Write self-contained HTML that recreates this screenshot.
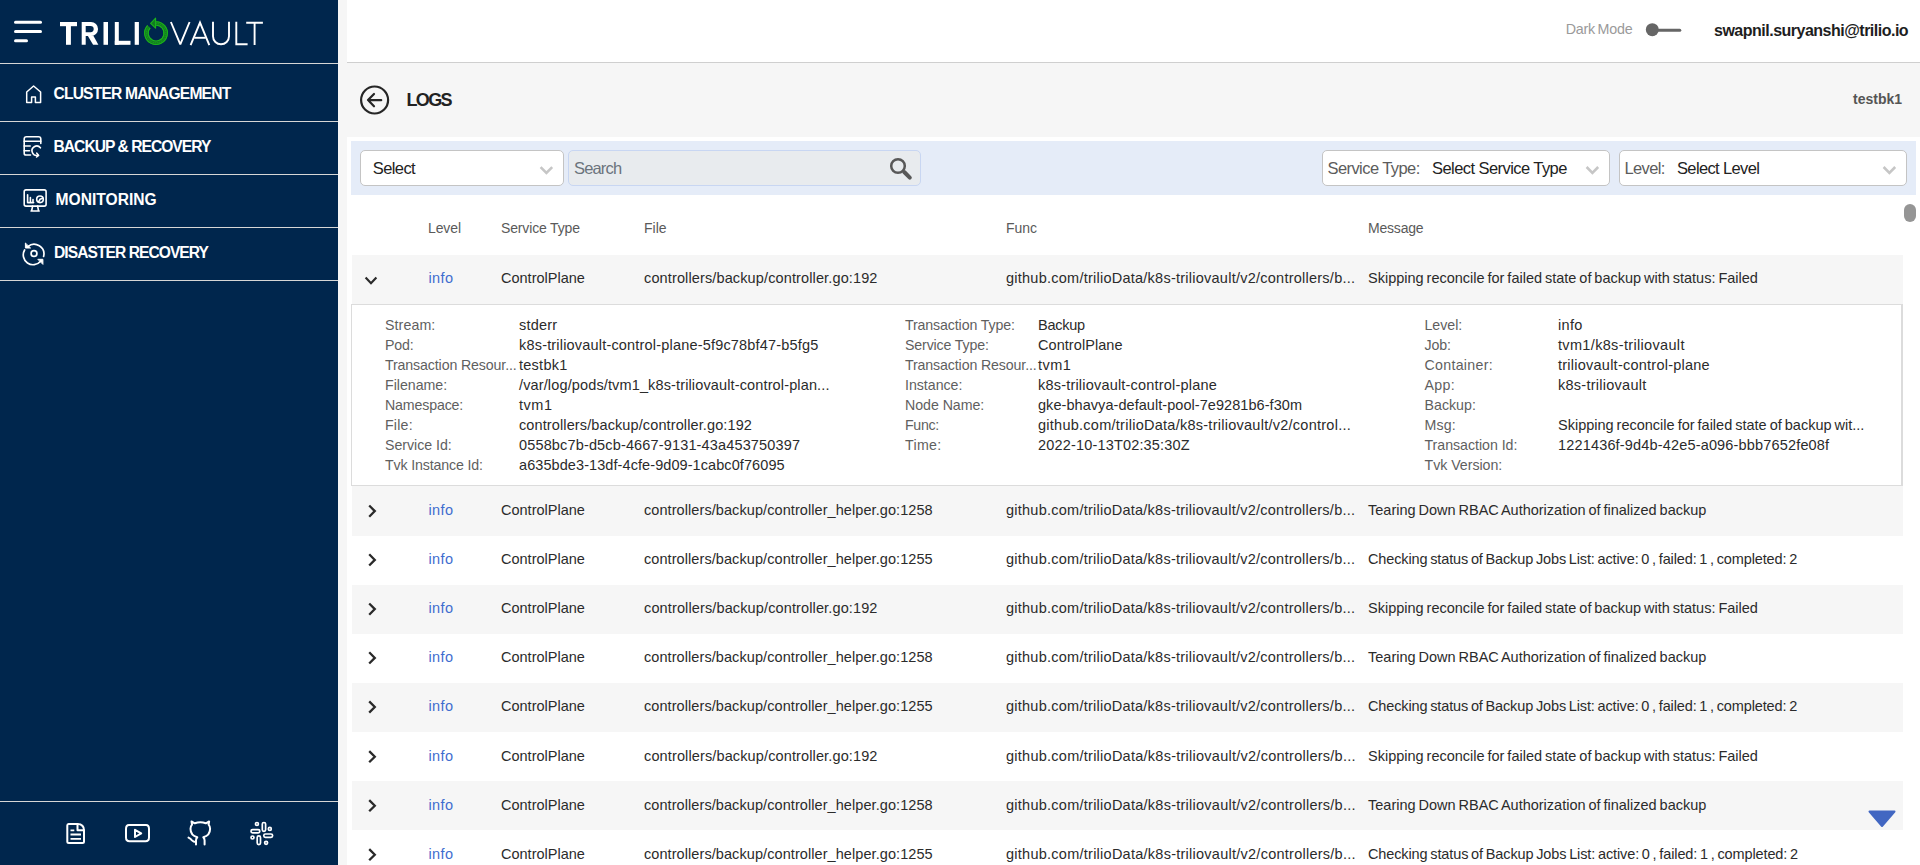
<!DOCTYPE html>
<html><head><meta charset="utf-8"><title>Logs</title>
<style>
html,body{margin:0;padding:0;width:1920px;height:865px;overflow:hidden;background:#f6f6f6;}
.r{position:absolute;}
.t{position:absolute;white-space:nowrap;}
</style></head><body>
<div class="r" style="left:0px;top:0px;width:1920px;height:865px;background:#f6f6f6;"></div>
<div class="r" style="left:347px;top:0px;width:1573px;height:62px;background:#ffffff;"></div>
<div class="r" style="left:347px;top:62px;width:1573px;height:1px;background:#cfcfcf;"></div>
<div class="r" style="left:347px;top:137px;width:1573px;height:728px;background:#ffffff;"></div>
<div class="r" style="left:351px;top:141px;width:1565px;height:54px;background:#e5ecf8;"></div>
<div class="r" style="left:0px;top:0px;width:338px;height:865px;background:#00264d;"></div>
<div class="r" style="left:0px;top:63px;width:338px;height:1px;background:#d6d6d6;"></div>
<div class="r" style="left:0px;top:121px;width:338px;height:1px;background:#d6d6d6;"></div>
<div class="r" style="left:0px;top:174px;width:338px;height:1px;background:#d6d6d6;"></div>
<div class="r" style="left:0px;top:227px;width:338px;height:1px;background:#d6d6d6;"></div>
<div class="r" style="left:0px;top:280px;width:338px;height:1px;background:#d6d6d6;"></div>
<div class="r" style="left:0px;top:801px;width:338px;height:1px;background:#d6d6d6;"></div>
<svg class="r" style="left:0;top:0" width="338" height="64" viewBox="0 0 338 64">
<g stroke="#fff" stroke-width="3" stroke-linecap="round">
<line x1="15.5" y1="22.3" x2="40.5" y2="22.3"/><line x1="15.5" y1="31.5" x2="40.5" y2="31.5"/><line x1="15.5" y1="40.7" x2="26.5" y2="40.7"/>
</g>
<g fill="#fff">
<rect x="60" y="22" width="17" height="4.2"/><rect x="66" y="22" width="4.9" height="22.8"/>
<path fill-rule="evenodd" d="M81.7,22 H91 A7.05,7.05 0 0 1 91,36.1 H85.7 V44.8 H81.7 Z M85.7,26 V32.2 H90.6 A3.1,3.1 0 0 0 90.6,26 Z"/>
<polygon points="87.6,35.6 93.2,35.6 98.4,44.8 93.1,44.8"/>
<rect x="103.5" y="22" width="4.5" height="22.8"/>
<rect x="114.8" y="22" width="4" height="22.8"/><rect x="114.8" y="40.8" width="15.7" height="4"/>
<rect x="134.7" y="22" width="4.2" height="22.8"/>
</g>
<g fill="none" stroke="#fff" stroke-width="1.9">
<path d="M170.9,22 L180.3,44.3 L189.6,22" stroke-linejoin="bevel"/>
<path d="M190.6,45.1 L200,22.6 L209.3,45.1"/><path d="M194.3,37.8 H205.7"/>
<path d="M213,21.8 V36.3 A8,8 0 0 0 229,36.3 V21.8"/>
<path d="M236.3,21.8 V44.2 H247.6"/>
<path d="M246.2,22.8 H262.9 M254.6,22.8 V45.1"/>
</g>
<g>
<path d="M156.1,23.4 A9.7,9.7 0 1 1 148.9,26.6" fill="none" stroke="#127a22" stroke-width="4.4"/>
<path d="M156.1,21.7 A11.4,11.4 0 1 1 147.6,25.4" fill="none" stroke="#1bb41b" stroke-width="1.1"/>
<path d="M156.1,25.2 A7.9,7.9 0 1 1 150.2,27.8" fill="none" stroke="#1bb41b" stroke-width="1.1"/>
<path d="M156.1,23.4 A9.7,9.7 0 1 1 148.9,26.6" fill="none" stroke="#1aa81a" stroke-width="1" stroke-dasharray="1.2 0.8"/>
<polygon points="150.6,23.3 155.6,18.2 155.6,28.2" fill="#127a22" stroke="#1bb41b" stroke-width="1.1" stroke-linejoin="round"/>
</g>
</svg>
<svg class="r" style="left:0;top:64" width="60" height="216" viewBox="0 64 60 216" fill="none" stroke="#fff" stroke-width="1.5" stroke-linejoin="round" stroke-linecap="round">
<path d="M26.7,102.4 V92 L33.6,86 L40.6,92 V102.4 H35.4 V96.9 H31.6 V102.4 Z"/>
<g stroke-width="1.6">
<path d="M30.5,155 H26 Q24.2,155 24.2,153.2 V139 Q24.2,136.8 26.5,136.8 H38.5 Q40.8,136.8 40.8,139 V143.5"/>
<path d="M24.2,141.2 H40.8"/><path d="M24.2,146 H30.2"/><path d="M24.2,150.8 H29.5"/>
<path d="M40.4,147.8 A4.7,4.7 0 1 0 38.2,155.2"/><path d="M36.8,153.2 L38.6,155.4 L36.6,157"/>
</g>
<g stroke-width="1.6">
<rect x="24.2" y="189.9" width="21.9" height="16.2" rx="1.8"/>
<path d="M31,211 H39.2 M32.6,206.1 L31.6,211 M37.6,206.1 L38.6,211"/>
<path d="M27.6,194.8 V202.6 H33.6 M30.4,197.5 V202.6 M33,199.5 V202.6"/>
<circle cx="40" cy="199.3" r="3.3"/><path d="M40,199.3 L38.5,202 M40,199.3 L42.6,198.2"/>
</g>
<g stroke-width="1.7">
<path d="M27.8,246.6 A9.8,9.8 0 0 1 43.6,256.5"/><path d="M24.6,250 A9.8,9.8 0 0 0 40.6,261.2"/>
<path d="M25.4,243.4 V248 H30.2 Z" fill="#fff" stroke-width="1"/><path d="M38.2,259.3 H42.9 V264 Z" fill="#fff" stroke-width="1"/>
<circle cx="34" cy="253.5" r="2.9"/>
</g>
</svg>
<div class="t" id="t0" style="left:53.5px;top:85px;font:700 15.6px 'Liberation Sans', sans-serif;color:#fff;letter-spacing:-0.34px;letter-spacing:-0.810px;">CLUSTER MANAGEMENT</div>
<div class="t" id="t1" style="left:53.5px;top:138px;font:700 15.6px 'Liberation Sans', sans-serif;color:#fff;letter-spacing:-0.4px;letter-spacing:-0.965px;">BACKUP &amp; RECOVERY</div>
<div class="t" id="t2" style="left:55.5px;top:191px;font:700 15.6px 'Liberation Sans', sans-serif;color:#fff;letter-spacing:-0.1px;letter-spacing:0.011px;">MONITORING</div>
<div class="t" id="t3" style="left:54px;top:244px;font:700 15.6px 'Liberation Sans', sans-serif;color:#fff;letter-spacing:-0.45px;letter-spacing:-0.949px;">DISASTER RECOVERY</div>
<svg class="r" style="left:0;top:810" width="338" height="45" viewBox="0 810 338 45" fill="none" stroke="#fff" stroke-width="2" stroke-linejoin="round" stroke-linecap="round">
<path d="M77.5,824 H68.5 Q67.3,824 67.3,825.5 V841.5 Q67.3,843 68.8,843 H82.5 Q84,843 84,841.5 V830.5 Q84,824 77.5,824 Z"/>
<path d="M77.5,824 V830.3 H84"/>
<path d="M70.5,830.4 H74.3 M70.5,834.5 H81 M70.5,838.8 H81" stroke-width="1.8" stroke-linecap="butt"/>
<path d="M129,825 H146 Q149,825 149,829 V837.5 Q149,841.3 145.5,841.3 H129.5 Q126,841.3 126,837.5 V829 Q126,825 129,825 Z"/>
<path d="M135,829.8 L141.2,833.4 L135,837 Z"/>
<path d="M196,844.5 V840.5 Q196,838.5 197.3,837.2 Q190.5,835.5 190.5,828.8 Q190.5,826.3 192,824.6 L191.5,821.5 L194.8,823.3 Q197.5,822.2 200.3,822.2 Q203.1,822.2 205.8,823.3 L209.1,821.5 L208.6,824.6 Q210.1,826.3 210.1,828.8 Q210.1,835.5 203.3,837.2 Q204.6,838.5 204.6,840.5 V844.5"/>
<path d="M188.5,837.6 Q190.5,838.5 192,840.3 Q193.5,842 196,842"/>
</g>
<g fill="none" stroke="#fff" stroke-width="1.7">
<rect x="255.5" y="822.5" width="2.9" height="2.9" rx="1.4"/>
<rect x="262.3" y="822.5" width="3.3" height="8.8" rx="1.6"/>
<rect x="268.3" y="827.4" width="3" height="3" rx="1.5"/>
<rect x="251" y="829.6" width="8.8" height="3.3" rx="1.6"/>
<rect x="263.8" y="834" width="8.8" height="3.3" rx="1.6"/>
<rect x="251" y="836" width="3" height="3" rx="1.5"/>
<rect x="257.2" y="835.9" width="3.3" height="8.8" rx="1.6"/>
<rect x="264.6" y="841.3" width="3" height="3" rx="1.5"/>
</g>
</svg>
<div class="t" id="t4" style="left:1565.7px;top:21px;font:400 14.3px 'Liberation Sans', sans-serif;color:#9a9a9a;word-spacing:-1px;letter-spacing:-0.250px;">Dark Mode</div>
<svg class="r" style="left:1640;top:18" width="50" height="24" viewBox="1640 18 50 24"><line x1="1652" y1="30.2" x2="1679.8" y2="30.2" stroke="#666" stroke-width="3" stroke-linecap="round"/><circle cx="1652.3" cy="29.7" r="6.5" fill="#666"/></svg>
<div class="t" id="t5" style="left:1714px;top:22.4px;font:700 16px 'Liberation Sans', sans-serif;color:#1e1e1e;letter-spacing:-0.5px;">swapnil.suryanshi@trilio.io</div>
<svg class="r" style="left:355;top:80" width="40" height="40" viewBox="355 80 40 40" fill="none" stroke="#262626" stroke-width="2.2" stroke-linecap="round" stroke-linejoin="round"><circle cx="374.6" cy="100" r="13.5"/><path d="M381.2,100.2 H368.2 M374,94 L368,100.1 L374,106.3"/></svg>
<div class="t" id="t6" style="left:406.5px;top:90px;font:700 18px 'Liberation Sans', sans-serif;color:#222;letter-spacing:-0.4px;letter-spacing:-1.677px;">LOGS</div>
<div class="t" id="t7" style="left:1853px;top:91px;font:700 14px 'Liberation Sans', sans-serif;color:#555;;">testbk1</div>
<div class="r" style="left:360px;top:150px;width:204px;height:36px;background:#fff;border:1px solid #c4c4c4;border-radius:5px;box-sizing:border-box"></div>
<div class="t" id="t8" style="left:372.8px;top:158.9px;font:400 16.5px 'Liberation Sans', sans-serif;color:#222;;letter-spacing:-0.600px;">Select</div>
<div class="r" style="left:568px;top:150px;width:353px;height:36px;background:#e8ebee;border:1px solid #c8d6f2;border-radius:5px;box-sizing:border-box"></div>
<div class="t" id="t9" style="left:574px;top:159.3px;font:400 16.5px 'Liberation Sans', sans-serif;color:#6b737c;;letter-spacing:-0.840px;">Search</div>
<div class="r" style="left:1322px;top:150px;width:288px;height:36px;background:#fff;border:1px solid #c4c4c4;border-radius:5px;box-sizing:border-box"></div>
<div class="t" id="t10" style="left:1327.5px;top:158.8px;font:400 16.5px 'Liberation Sans', sans-serif;color:#5c5c5c;;letter-spacing:-0.576px;">Service Type:</div>
<div class="t" id="t11" style="left:1432px;top:158.8px;font:400 16.5px 'Liberation Sans', sans-serif;color:#222;;letter-spacing:-0.562px;">Select Service Type</div>
<div class="r" style="left:1619px;top:150px;width:288px;height:36px;background:#fff;border:1px solid #c4c4c4;border-radius:5px;box-sizing:border-box"></div>
<div class="t" id="t12" style="left:1624.5px;top:158.8px;font:400 16.5px 'Liberation Sans', sans-serif;color:#5c5c5c;;letter-spacing:-0.640px;">Level:</div>
<div class="t" id="t13" style="left:1677px;top:158.8px;font:400 16.5px 'Liberation Sans', sans-serif;color:#222;;letter-spacing:-0.635px;">Select Level</div>
<svg class="r" style="left:0;top:150" width="1920" height="40" viewBox="0 150 1920 40" fill="none" stroke-linecap="butt" stroke-linejoin="miter">
<path d="M540.6,167.2 L546.4,173 L552.2,167.2" stroke="#c6c6c6" stroke-width="2.6"/>
<path d="M1586.6,167 L1592.4,172.8 L1598.2,167" stroke="#c6c6c6" stroke-width="2.6"/>
<path d="M1883.6,167 L1889.4,172.8 L1895.2,167" stroke="#c6c6c6" stroke-width="2.6"/>
<circle cx="898" cy="166" r="6.8" stroke="#585858" stroke-width="2.5"/><path d="M904.2,172 L909.8,177.6" stroke="#585858" stroke-width="4" stroke-linecap="round"/>
</svg>
<div class="r" style="left:1904px;top:204px;width:12px;height:18px;background:#959595;border-radius:6px"></div>
<div class="t" id="t14" style="left:428px;top:220px;font:400 14px 'Liberation Sans', sans-serif;color:#5a5a5a;letter-spacing:-0.1px;">Level</div>
<div class="t" id="t15" style="left:501px;top:220px;font:400 14px 'Liberation Sans', sans-serif;color:#5a5a5a;letter-spacing:-0.15px;">Service Type</div>
<div class="t" id="t16" style="left:644px;top:220px;font:400 14px 'Liberation Sans', sans-serif;color:#5a5a5a;;">File</div>
<div class="t" id="t17" style="left:1006px;top:220px;font:400 14px 'Liberation Sans', sans-serif;color:#5a5a5a;;">Func</div>
<div class="t" id="t18" style="left:1368px;top:220px;font:400 14px 'Liberation Sans', sans-serif;color:#5a5a5a;letter-spacing:-0.2px;">Message</div>
<div class="r" style="left:352px;top:255px;width:1551px;height:49px;background:#f6f6f6;"></div>
<svg class="r" style="left:360;top:270" width="22" height="20" viewBox="360 270 22 20"><path d="M365.6,277.6 L371,283.2 L376.4,277.6" fill="none" stroke="#2a2a2a" stroke-width="2.2" stroke-linecap="butt" stroke-linejoin="miter"/></svg>
<div class="t" id="t19" style="left:428.5px;top:269.6px;font:400 14.5px 'Liberation Sans', sans-serif;color:#3f6dcf;letter-spacing:0.4px;">info</div>
<div class="t" id="t20" style="left:501px;top:269.6px;font:400 14.5px 'Liberation Sans', sans-serif;color:#2b2b2b;;">ControlPlane</div>
<div class="t" id="t21" style="left:644px;top:269.6px;font:400 14.5px 'Liberation Sans', sans-serif;color:#2b2b2b;letter-spacing:0.1px;letter-spacing:0.129px;">controllers/backup/controller.go:192</div>
<div class="t" id="t22" style="left:1006px;top:269.6px;font:400 14.5px 'Liberation Sans', sans-serif;color:#2b2b2b;letter-spacing:0.05px;letter-spacing:0.246px;">github.com/trilioData/k8s-triliovault/v2/controllers/b...</div>
<div class="t" id="t23" style="left:1368px;top:269.6px;font:400 14.5px 'Liberation Sans', sans-serif;color:#2b2b2b;word-spacing:-1.1px;letter-spacing:0.000px;">Skipping reconcile for failed state of backup with status: Failed</div>
<div class="r" style="left:351px;top:304px;width:1552px;height:182px;background:#fff;border:1px solid #dcdcdc;border-right-width:2px;box-sizing:border-box"></div>
<div class="t" id="t24" style="left:385px;top:317px;font:400 14.2px 'Liberation Sans', sans-serif;color:#5f5f5f;letter-spacing:-0.15px;letter-spacing:0.101px;">Stream:</div>
<div class="t" id="t25" style="left:519px;top:317px;font:400 14.5px 'Liberation Sans', sans-serif;color:#2b2b2b;word-spacing:-1px;letter-spacing:0.200px;">stderr</div>
<div class="t" id="t26" style="left:385px;top:337px;font:400 14.2px 'Liberation Sans', sans-serif;color:#5f5f5f;letter-spacing:-0.15px;letter-spacing:-0.150px;">Pod:</div>
<div class="t" id="t27" style="left:519px;top:337px;font:400 14.5px 'Liberation Sans', sans-serif;color:#2b2b2b;word-spacing:-1px;letter-spacing:0.187px;">k8s-triliovault-control-plane-5f9c78bf47-b5fg5</div>
<div class="t" id="t28" style="left:385px;top:357px;font:400 14.2px 'Liberation Sans', sans-serif;color:#5f5f5f;letter-spacing:-0.15px;letter-spacing:-0.130px;">Transaction Resour...</div>
<div class="t" id="t29" style="left:519px;top:357px;font:400 14.5px 'Liberation Sans', sans-serif;color:#2b2b2b;word-spacing:-1px;letter-spacing:0.251px;">testbk1</div>
<div class="t" id="t30" style="left:385px;top:377px;font:400 14.2px 'Liberation Sans', sans-serif;color:#5f5f5f;letter-spacing:-0.15px;letter-spacing:-0.025px;">Filename:</div>
<div class="t" id="t31" style="left:519px;top:377px;font:400 14.5px 'Liberation Sans', sans-serif;color:#2b2b2b;word-spacing:-1px;letter-spacing:0.135px;">/var/log/pods/tvm1_k8s-triliovault-control-plan...</div>
<div class="t" id="t32" style="left:385px;top:397px;font:400 14.2px 'Liberation Sans', sans-serif;color:#5f5f5f;letter-spacing:-0.15px;letter-spacing:-0.156px;">Namespace:</div>
<div class="t" id="t33" style="left:519px;top:397px;font:400 14.5px 'Liberation Sans', sans-serif;color:#2b2b2b;word-spacing:-1px;letter-spacing:0.523px;">tvm1</div>
<div class="t" id="t34" style="left:385px;top:417px;font:400 14.2px 'Liberation Sans', sans-serif;color:#5f5f5f;letter-spacing:-0.15px;letter-spacing:0.200px;">File:</div>
<div class="t" id="t35" style="left:519px;top:417px;font:400 14.5px 'Liberation Sans', sans-serif;color:#2b2b2b;word-spacing:-1px;letter-spacing:0.114px;">controllers/backup/controller.go:192</div>
<div class="t" id="t36" style="left:385px;top:437px;font:400 14.2px 'Liberation Sans', sans-serif;color:#5f5f5f;letter-spacing:-0.15px;letter-spacing:-0.030px;">Service Id:</div>
<div class="t" id="t37" style="left:519px;top:437px;font:400 14.5px 'Liberation Sans', sans-serif;color:#2b2b2b;word-spacing:-1px;letter-spacing:0.150px;">0558bc7b-d5cb-4667-9131-43a453750397</div>
<div class="t" id="t38" style="left:385px;top:457px;font:400 14.2px 'Liberation Sans', sans-serif;color:#5f5f5f;letter-spacing:-0.15px;letter-spacing:-0.142px;">Tvk Instance Id:</div>
<div class="t" id="t39" style="left:519px;top:457px;font:400 14.5px 'Liberation Sans', sans-serif;color:#2b2b2b;word-spacing:-1px;letter-spacing:0.079px;">a635bde3-13df-4cfe-9d09-1cabc0f76095</div>
<div class="t" id="t40" style="left:905px;top:317px;font:400 14.2px 'Liberation Sans', sans-serif;color:#5f5f5f;letter-spacing:-0.15px;letter-spacing:-0.132px;">Transaction Type:</div>
<div class="t" id="t41" style="left:1038px;top:317px;font:400 14.5px 'Liberation Sans', sans-serif;color:#2b2b2b;word-spacing:-1px;letter-spacing:-0.240px;">Backup</div>
<div class="t" id="t42" style="left:905px;top:337px;font:400 14.2px 'Liberation Sans', sans-serif;color:#5f5f5f;letter-spacing:-0.15px;letter-spacing:-0.150px;">Service Type:</div>
<div class="t" id="t43" style="left:1038px;top:337px;font:400 14.5px 'Liberation Sans', sans-serif;color:#2b2b2b;word-spacing:-1px;letter-spacing:0.060px;">ControlPlane</div>
<div class="t" id="t44" style="left:905px;top:357px;font:400 14.2px 'Liberation Sans', sans-serif;color:#5f5f5f;letter-spacing:-0.130px;">Transaction Resour...</div>
<div class="t" id="t45" style="left:1038px;top:357px;font:400 14.5px 'Liberation Sans', sans-serif;color:#2b2b2b;word-spacing:-1px;letter-spacing:0.477px;">tvm1</div>
<div class="t" id="t46" style="left:905px;top:377px;font:400 14.2px 'Liberation Sans', sans-serif;color:#5f5f5f;letter-spacing:-0.15px;letter-spacing:-0.023px;">Instance:</div>
<div class="t" id="t47" style="left:1038px;top:377px;font:400 14.5px 'Liberation Sans', sans-serif;color:#2b2b2b;word-spacing:-1px;letter-spacing:0.197px;">k8s-triliovault-control-plane</div>
<div class="t" id="t48" style="left:905px;top:397px;font:400 14.2px 'Liberation Sans', sans-serif;color:#5f5f5f;letter-spacing:-0.15px;letter-spacing:-0.039px;">Node Name:</div>
<div class="t" id="t49" style="left:1038px;top:397px;font:400 14.5px 'Liberation Sans', sans-serif;color:#2b2b2b;word-spacing:-1px;letter-spacing:0.056px;">gke-bhavya-default-pool-7e9281b6-f30m</div>
<div class="t" id="t50" style="left:905px;top:417px;font:400 14.2px 'Liberation Sans', sans-serif;color:#5f5f5f;letter-spacing:-0.15px;letter-spacing:-0.300px;">Func:</div>
<div class="t" id="t51" style="left:1038px;top:417px;font:400 14.5px 'Liberation Sans', sans-serif;color:#2b2b2b;word-spacing:-1px;letter-spacing:0.260px;">github.com/trilioData/k8s-triliovault/v2/control...</div>
<div class="t" id="t52" style="left:905px;top:437px;font:400 14.2px 'Liberation Sans', sans-serif;color:#5f5f5f;letter-spacing:-0.15px;letter-spacing:0.300px;">Time:</div>
<div class="t" id="t53" style="left:1038px;top:437px;font:400 14.5px 'Liberation Sans', sans-serif;color:#2b2b2b;word-spacing:-1px;letter-spacing:0.174px;">2022-10-13T02:35:30Z</div>
<div class="t" id="t54" style="left:1424.5px;top:317px;font:400 14.2px 'Liberation Sans', sans-serif;color:#5f5f5f;letter-spacing:-0.15px;letter-spacing:-0.030px;">Level:</div>
<div class="t" id="t55" style="left:1558px;top:317px;font:400 14.5px 'Liberation Sans', sans-serif;color:#2b2b2b;word-spacing:-1px;letter-spacing:0.333px;">info</div>
<div class="t" id="t56" style="left:1424.5px;top:337px;font:400 14.2px 'Liberation Sans', sans-serif;color:#5f5f5f;letter-spacing:-0.15px;letter-spacing:-0.150px;">Job:</div>
<div class="t" id="t57" style="left:1558px;top:337px;font:400 14.5px 'Liberation Sans', sans-serif;color:#2b2b2b;word-spacing:-1px;letter-spacing:0.337px;">tvm1/k8s-triliovault</div>
<div class="t" id="t58" style="left:1424.5px;top:357px;font:400 14.2px 'Liberation Sans', sans-serif;color:#5f5f5f;letter-spacing:-0.15px;letter-spacing:0.301px;">Container:</div>
<div class="t" id="t59" style="left:1558px;top:357px;font:400 14.5px 'Liberation Sans', sans-serif;color:#2b2b2b;word-spacing:-1px;letter-spacing:0.242px;">triliovault-control-plane</div>
<div class="t" id="t60" style="left:1424.5px;top:377px;font:400 14.2px 'Liberation Sans', sans-serif;color:#5f5f5f;letter-spacing:-0.15px;letter-spacing:0.373px;">App:</div>
<div class="t" id="t61" style="left:1558px;top:377px;font:400 14.5px 'Liberation Sans', sans-serif;color:#2b2b2b;word-spacing:-1px;letter-spacing:0.262px;">k8s-triliovault</div>
<div class="t" id="t62" style="left:1424.5px;top:397px;font:400 14.2px 'Liberation Sans', sans-serif;color:#5f5f5f;letter-spacing:-0.15px;letter-spacing:0.016px;">Backup:</div>
<div class="t" id="t63" style="left:1424.5px;top:417px;font:400 14.2px 'Liberation Sans', sans-serif;color:#5f5f5f;letter-spacing:-0.15px;letter-spacing:0.111px;">Msg:</div>
<div class="t" id="t64" style="left:1558px;top:417px;font:400 14.5px 'Liberation Sans', sans-serif;color:#2b2b2b;word-spacing:-1px;letter-spacing:-0.004px;">Skipping reconcile for failed state of backup wit...</div>
<div class="t" id="t65" style="left:1424.5px;top:437px;font:400 14.2px 'Liberation Sans', sans-serif;color:#5f5f5f;letter-spacing:-0.15px;letter-spacing:-0.031px;">Transaction Id:</div>
<div class="t" id="t66" style="left:1558px;top:437px;font:400 14.5px 'Liberation Sans', sans-serif;color:#2b2b2b;word-spacing:-1px;letter-spacing:0.167px;">1221436f-9d4b-42e5-a096-bbb7652fe08f</div>
<div class="t" id="t67" style="left:1424.5px;top:457px;font:400 14.2px 'Liberation Sans', sans-serif;color:#5f5f5f;letter-spacing:-0.15px;letter-spacing:-0.030px;">Tvk Version:</div>
<div class="r" style="left:352px;top:486px;width:1551px;height:50px;background:#f6f6f6;"></div>
<svg class="r" style="left:360;top:496" width="22" height="30" viewBox="360 496 22 30"><path d="M369.2,505.5 L374.8,511.09999999999997 L369.2,516.6999999999999" fill="none" stroke="#2a2a2a" stroke-width="2.3" stroke-linecap="butt" stroke-linejoin="miter"/></svg>
<div class="t" id="t68" style="left:428.5px;top:502.4px;font:400 14.5px 'Liberation Sans', sans-serif;color:#3f6dcf;letter-spacing:0.4px;">info</div>
<div class="t" id="t69" style="left:501px;top:502.4px;font:400 14.5px 'Liberation Sans', sans-serif;color:#2b2b2b;;">ControlPlane</div>
<div class="t" id="t70" style="left:644px;top:502.4px;font:400 14.5px 'Liberation Sans', sans-serif;color:#2b2b2b;letter-spacing:0.1px;letter-spacing:0.077px;">controllers/backup/controller_helper.go:1258</div>
<div class="t" id="t71" style="left:1006px;top:502.4px;font:400 14.5px 'Liberation Sans', sans-serif;color:#2b2b2b;letter-spacing:0.05px;letter-spacing:0.246px;">github.com/trilioData/k8s-triliovault/v2/controllers/b...</div>
<div class="t" id="t72" style="left:1368px;top:502.4px;font:400 14.5px 'Liberation Sans', sans-serif;color:#2b2b2b;word-spacing:-1.1px;letter-spacing:0.000px;">Tearing Down RBAC Authorization of finalized backup</div>
<svg class="r" style="left:360;top:546" width="22" height="30" viewBox="360 546 22 30"><path d="M369.2,554.3000000000001 L374.8,559.9000000000001 L369.2,565.5" fill="none" stroke="#2a2a2a" stroke-width="2.3" stroke-linecap="butt" stroke-linejoin="miter"/></svg>
<div class="t" id="t73" style="left:428.5px;top:551.2px;font:400 14.5px 'Liberation Sans', sans-serif;color:#3f6dcf;letter-spacing:0.4px;">info</div>
<div class="t" id="t74" style="left:501px;top:551.2px;font:400 14.5px 'Liberation Sans', sans-serif;color:#2b2b2b;;">ControlPlane</div>
<div class="t" id="t75" style="left:644px;top:551.2px;font:400 14.5px 'Liberation Sans', sans-serif;color:#2b2b2b;letter-spacing:0.1px;letter-spacing:0.077px;">controllers/backup/controller_helper.go:1255</div>
<div class="t" id="t76" style="left:1006px;top:551.2px;font:400 14.5px 'Liberation Sans', sans-serif;color:#2b2b2b;letter-spacing:0.05px;letter-spacing:0.246px;">github.com/trilioData/k8s-triliovault/v2/controllers/b...</div>
<div class="t" id="t77" style="left:1368px;top:551.2px;font:400 14.5px 'Liberation Sans', sans-serif;color:#2b2b2b;word-spacing:-1.1px;letter-spacing:-0.131px;">Checking status of Backup Jobs List: active: 0 , failed: 1 , completed: 2</div>
<div class="r" style="left:352px;top:585px;width:1551px;height:49px;background:#f6f6f6;"></div>
<svg class="r" style="left:360;top:595" width="22" height="30" viewBox="360 595 22 30"><path d="M369.2,603.5 L374.8,609.1 L369.2,614.6999999999999" fill="none" stroke="#2a2a2a" stroke-width="2.3" stroke-linecap="butt" stroke-linejoin="miter"/></svg>
<div class="t" id="t78" style="left:428.5px;top:600.4px;font:400 14.5px 'Liberation Sans', sans-serif;color:#3f6dcf;letter-spacing:0.4px;">info</div>
<div class="t" id="t79" style="left:501px;top:600.4px;font:400 14.5px 'Liberation Sans', sans-serif;color:#2b2b2b;;">ControlPlane</div>
<div class="t" id="t80" style="left:644px;top:600.4px;font:400 14.5px 'Liberation Sans', sans-serif;color:#2b2b2b;letter-spacing:0.1px;letter-spacing:0.129px;">controllers/backup/controller.go:192</div>
<div class="t" id="t81" style="left:1006px;top:600.4px;font:400 14.5px 'Liberation Sans', sans-serif;color:#2b2b2b;letter-spacing:0.05px;letter-spacing:0.246px;">github.com/trilioData/k8s-triliovault/v2/controllers/b...</div>
<div class="t" id="t82" style="left:1368px;top:600.4px;font:400 14.5px 'Liberation Sans', sans-serif;color:#2b2b2b;word-spacing:-1.1px;letter-spacing:0.000px;">Skipping reconcile for failed state of backup with status: Failed</div>
<svg class="r" style="left:360;top:644" width="22" height="30" viewBox="360 644 22 30"><path d="M369.2,652.3000000000001 L374.8,657.9000000000001 L369.2,663.5" fill="none" stroke="#2a2a2a" stroke-width="2.3" stroke-linecap="butt" stroke-linejoin="miter"/></svg>
<div class="t" id="t83" style="left:428.5px;top:649.2px;font:400 14.5px 'Liberation Sans', sans-serif;color:#3f6dcf;letter-spacing:0.4px;">info</div>
<div class="t" id="t84" style="left:501px;top:649.2px;font:400 14.5px 'Liberation Sans', sans-serif;color:#2b2b2b;;">ControlPlane</div>
<div class="t" id="t85" style="left:644px;top:649.2px;font:400 14.5px 'Liberation Sans', sans-serif;color:#2b2b2b;letter-spacing:0.1px;letter-spacing:0.077px;">controllers/backup/controller_helper.go:1258</div>
<div class="t" id="t86" style="left:1006px;top:649.2px;font:400 14.5px 'Liberation Sans', sans-serif;color:#2b2b2b;letter-spacing:0.05px;letter-spacing:0.246px;">github.com/trilioData/k8s-triliovault/v2/controllers/b...</div>
<div class="t" id="t87" style="left:1368px;top:649.2px;font:400 14.5px 'Liberation Sans', sans-serif;color:#2b2b2b;word-spacing:-1.1px;letter-spacing:0.000px;">Tearing Down RBAC Authorization of finalized backup</div>
<div class="r" style="left:352px;top:683px;width:1551px;height:49px;background:#f6f6f6;"></div>
<svg class="r" style="left:360;top:693" width="22" height="30" viewBox="360 693 22 30"><path d="M369.2,701.4 L374.8,707.0 L369.2,712.5999999999999" fill="none" stroke="#2a2a2a" stroke-width="2.3" stroke-linecap="butt" stroke-linejoin="miter"/></svg>
<div class="t" id="t88" style="left:428.5px;top:698.3px;font:400 14.5px 'Liberation Sans', sans-serif;color:#3f6dcf;letter-spacing:0.4px;">info</div>
<div class="t" id="t89" style="left:501px;top:698.3px;font:400 14.5px 'Liberation Sans', sans-serif;color:#2b2b2b;;">ControlPlane</div>
<div class="t" id="t90" style="left:644px;top:698.3px;font:400 14.5px 'Liberation Sans', sans-serif;color:#2b2b2b;letter-spacing:0.1px;letter-spacing:0.077px;">controllers/backup/controller_helper.go:1255</div>
<div class="t" id="t91" style="left:1006px;top:698.3px;font:400 14.5px 'Liberation Sans', sans-serif;color:#2b2b2b;letter-spacing:0.05px;letter-spacing:0.246px;">github.com/trilioData/k8s-triliovault/v2/controllers/b...</div>
<div class="t" id="t92" style="left:1368px;top:698.3px;font:400 14.5px 'Liberation Sans', sans-serif;color:#2b2b2b;word-spacing:-1.1px;letter-spacing:-0.131px;">Checking status of Backup Jobs List: active: 0 , failed: 1 , completed: 2</div>
<svg class="r" style="left:360;top:742" width="22" height="30" viewBox="360 742 22 30"><path d="M369.2,751.1 L374.8,756.7 L369.2,762.3" fill="none" stroke="#2a2a2a" stroke-width="2.3" stroke-linecap="butt" stroke-linejoin="miter"/></svg>
<div class="t" id="t93" style="left:428.5px;top:748px;font:400 14.5px 'Liberation Sans', sans-serif;color:#3f6dcf;letter-spacing:0.4px;">info</div>
<div class="t" id="t94" style="left:501px;top:748px;font:400 14.5px 'Liberation Sans', sans-serif;color:#2b2b2b;;">ControlPlane</div>
<div class="t" id="t95" style="left:644px;top:748px;font:400 14.5px 'Liberation Sans', sans-serif;color:#2b2b2b;letter-spacing:0.1px;letter-spacing:0.129px;">controllers/backup/controller.go:192</div>
<div class="t" id="t96" style="left:1006px;top:748px;font:400 14.5px 'Liberation Sans', sans-serif;color:#2b2b2b;letter-spacing:0.05px;letter-spacing:0.255px;">github.com/trilioData/k8s-triliovault/v2/controllers/b...</div>
<div class="t" id="t97" style="left:1368px;top:748px;font:400 14.5px 'Liberation Sans', sans-serif;color:#2b2b2b;word-spacing:-1.1px;letter-spacing:0.000px;">Skipping reconcile for failed state of backup with status: Failed</div>
<div class="r" style="left:352px;top:781px;width:1551px;height:49px;background:#f6f6f6;"></div>
<svg class="r" style="left:360;top:791" width="22" height="30" viewBox="360 791 22 30"><path d="M369.2,800.1 L374.8,805.7 L369.2,811.3" fill="none" stroke="#2a2a2a" stroke-width="2.3" stroke-linecap="butt" stroke-linejoin="miter"/></svg>
<div class="t" id="t98" style="left:428.5px;top:797px;font:400 14.5px 'Liberation Sans', sans-serif;color:#3f6dcf;letter-spacing:0.4px;">info</div>
<div class="t" id="t99" style="left:501px;top:797px;font:400 14.5px 'Liberation Sans', sans-serif;color:#2b2b2b;;">ControlPlane</div>
<div class="t" id="t100" style="left:644px;top:797px;font:400 14.5px 'Liberation Sans', sans-serif;color:#2b2b2b;letter-spacing:0.1px;letter-spacing:0.077px;">controllers/backup/controller_helper.go:1258</div>
<div class="t" id="t101" style="left:1006px;top:797px;font:400 14.5px 'Liberation Sans', sans-serif;color:#2b2b2b;letter-spacing:0.05px;letter-spacing:0.255px;">github.com/trilioData/k8s-triliovault/v2/controllers/b...</div>
<div class="t" id="t102" style="left:1368px;top:797px;font:400 14.5px 'Liberation Sans', sans-serif;color:#2b2b2b;word-spacing:-1.1px;letter-spacing:0.000px;">Tearing Down RBAC Authorization of finalized backup</div>
<svg class="r" style="left:360;top:840" width="22" height="30" viewBox="360 840 22 30"><path d="M369.2,849.1 L374.8,854.7 L369.2,860.3" fill="none" stroke="#2a2a2a" stroke-width="2.3" stroke-linecap="butt" stroke-linejoin="miter"/></svg>
<div class="t" id="t103" style="left:428.5px;top:846px;font:400 14.5px 'Liberation Sans', sans-serif;color:#3f6dcf;letter-spacing:0.4px;">info</div>
<div class="t" id="t104" style="left:501px;top:846px;font:400 14.5px 'Liberation Sans', sans-serif;color:#2b2b2b;;">ControlPlane</div>
<div class="t" id="t105" style="left:644px;top:846px;font:400 14.5px 'Liberation Sans', sans-serif;color:#2b2b2b;letter-spacing:0.1px;letter-spacing:0.077px;">controllers/backup/controller_helper.go:1255</div>
<div class="t" id="t106" style="left:1006px;top:846px;font:400 14.5px 'Liberation Sans', sans-serif;color:#2b2b2b;letter-spacing:0.05px;letter-spacing:0.255px;">github.com/trilioData/k8s-triliovault/v2/controllers/b...</div>
<div class="t" id="t107" style="left:1368px;top:846px;font:400 14.5px 'Liberation Sans', sans-serif;color:#2b2b2b;word-spacing:-1.1px;letter-spacing:-0.119px;">Checking status of Backup Jobs List: active: 0 , failed: 1 , completed: 2</div>
<svg class="r" style="left:1860;top:805" width="44" height="28" viewBox="1860 805 44 28"><path d="M1869.5,811.5 H1894.5 L1882,826 Z" fill="#4267c2" stroke="#4267c2" stroke-width="2" stroke-linejoin="round"/></svg>
</body></html>
